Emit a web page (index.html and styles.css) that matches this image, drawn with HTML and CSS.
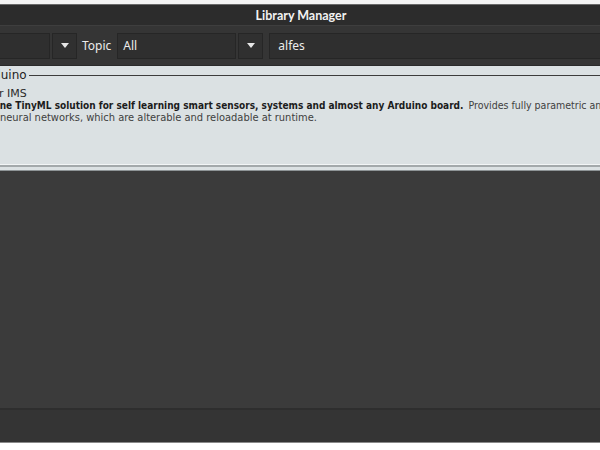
FILE: index.html
```html
<!DOCTYPE html>
<html>
<head>
<meta charset="utf-8">
<link rel="stylesheet" href="styles.css">
</head>
<body>
<div class="window">
  <div class="topedge"></div>
  <header class="titlebar"><span class="title">Library Manager</span></header>
  <div class="toolbar">
    <div class="combo type-combo"><span class="val">All</span></div>
    <div class="arrow"><svg width="8" height="5" viewBox="0 0 8 5"><path d="M0 0H8L4 5Z" fill="#e6e6e6"/></svg></div>
    <span class="label">Topic</span>
    <div class="combo topic-combo"><span class="val">All</span></div>
    <div class="arrow"><svg width="8" height="5" viewBox="0 0 8 5"><path d="M0 0H8L4 5Z" fill="#e6e6e6"/></svg></div>
    <div class="search"><span class="val">alfes</span></div>
  </div>
  <div class="list">
    <div class="item">
      <fieldset class="entry">
        <legend class="name">aifes_for_arduino</legend>
        <div class="author">by Fraunhofer IMS</div>
        <div class="desc">
          <div class="line"><b>The standalone TinyML solution for self learning smart sensors, systems and almost any Arduino board.</b> <span class="para">Provides fully parametric and modular</span></div>
          <div class="line para">configurable neural networks, which are alterable and reloadable at runtime.</div>
        </div>
      </fieldset>
    </div>
    <div class="rest"></div>
  </div>
  <div class="status"></div>
  <div class="bottomedge"></div>
</div>
</body>
</html>
```
FILE: styles.css
```css
* { box-sizing: border-box; }
html, body { margin: 0; padding: 0; }
body { width: 600px; height: 450px; overflow: hidden; background: #ffffff; font-family: "DejaVu Sans", sans-serif; }
.window { width: 600px; height: 450px; display: flex; flex-direction: column; overflow: hidden; }
.topedge { height: 5px; background: #f4f4f4; border-bottom: 1px solid #6a6a6a; flex: none; }
.titlebar { height: 21px; flex: none; background: #2c2c2c; display: flex; align-items: center; justify-content: center; border-bottom: 1px solid #3e3e3e; }
.title { font-family: "Lato", "Noto Sans", sans-serif; font-weight: 700; font-size: 12.5px; color: #f2f2f2; margin-left: 2px; }
.toolbar { height: 40px; flex: none; background: #353535; display: flex; align-items: center; border-bottom: 1px solid #2a2a2a; font-family: "Noto Sans", sans-serif; font-size: 12px; color: #ececec; }
.combo, .search { height: 26px; background: #2f2f2f; border: 1px solid #262626; display: flex; align-items: center; padding-left: 5px; }
.type-combo { width: 120px; margin-left: -70px; }
.topic-combo { width: 119px; margin-left: 6px; }
.arrow { width: 25px; height: 26px; margin-left: 2px; background: #303030; border: 1px solid #262626; display: flex; align-items: center; justify-content: center; }
.label { margin-left: 5px; }
.search { flex: 1; margin-left: 6px; margin-right: -10px; padding-left: 8px; }
.list { flex: 1; display: flex; flex-direction: column; background: #3b3b3b; }
.item { height: 105px; flex: none; background: #dbe1e3; padding: 2px 3px 0 0; border-bottom: 1px solid #8e9496; }
.entry { margin: 0 0 0 -110px; height: 99px; border: 1px solid #3c3c3c; border-left: none; border-bottom: 2px solid #a3a9ab; box-shadow: inset 0 -1px 0 #f2f5f6; padding: 2px 0 0 30px; font-family: "DejaVu Sans", sans-serif; color: #2b2b2b; }
.name { font-size: 12px; padding: 0 2px 0 0; margin-left: 4px; color: #1e1e1e; line-height: 14px; }
.author { font-size: 11px; line-height: 14px; margin-top: 3px; margin-left: 7px; }
.desc { margin-left: 14px; margin-top: -3px; white-space: nowrap; color: #3a3a3a; }
.desc b { font-size: 10px; line-height: 12px; font-stretch: condensed; color: #1c1c1c; }
.para { font-size: 10.5px; font-stretch: condensed; color: #404040; }
.line { white-space: nowrap; height: 12px; line-height: 12px; }
.line.para { font-size: 11px; margin-left: 1px; margin-top: 1px; height: 13px; line-height: 13px; }
.rest { flex: 1; background: #3b3b3b; }
.status { height: 34px; flex: none; background: #343434; border-top: 2px solid #2e2e2e; }
.bottomedge { height: 8px; flex: none; background: #ffffff; border-top: 1px solid #8a8a8a; }
```
